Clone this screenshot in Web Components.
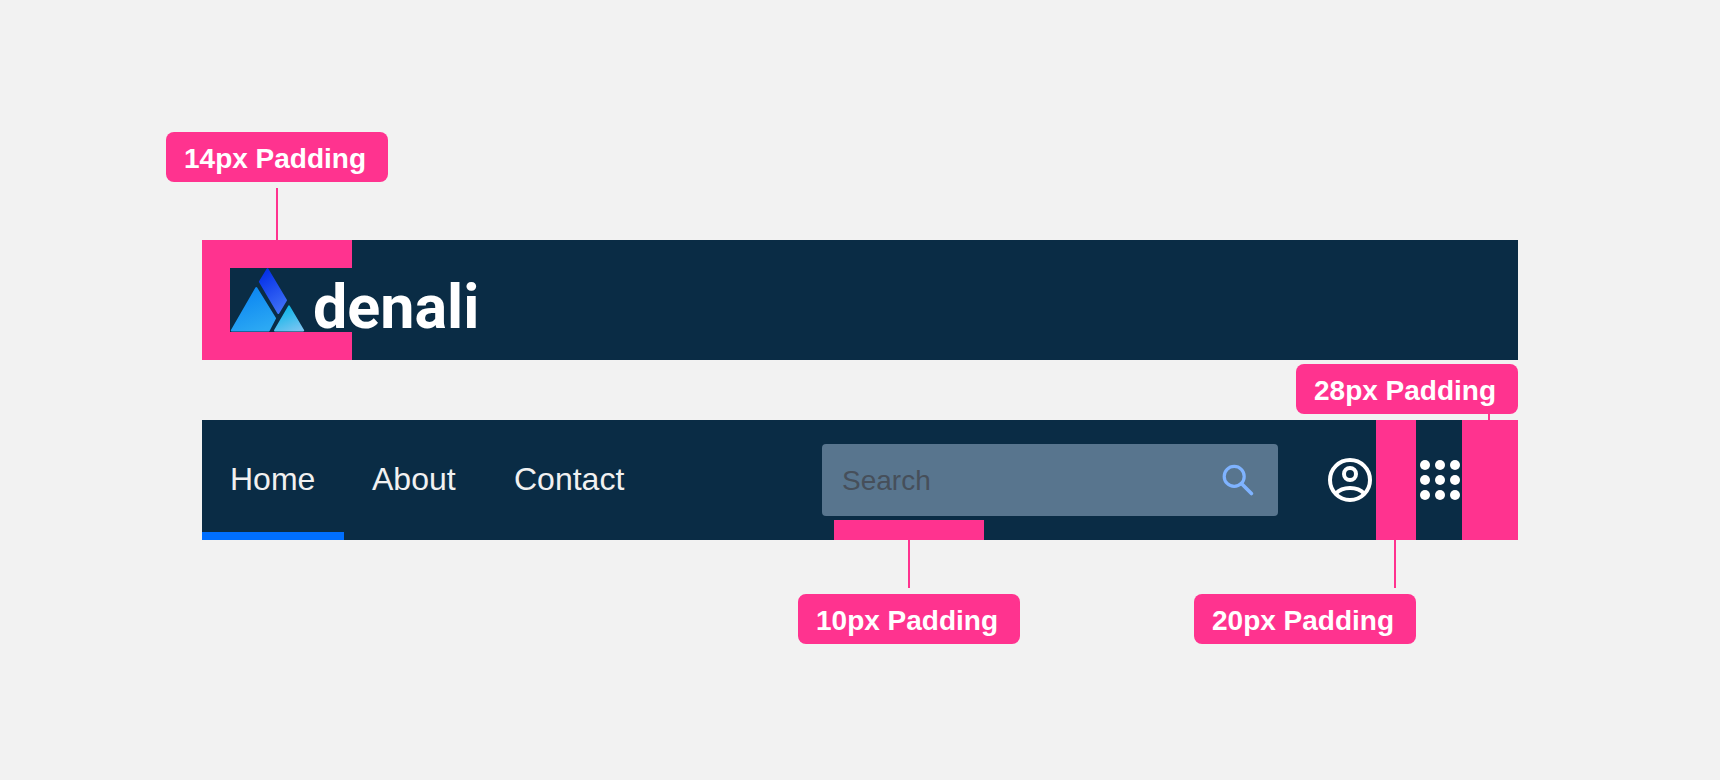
<!DOCTYPE html>
<html lang="en">
<head>
<meta charset="utf-8">
<title>Denali navbar padding</title>
<style>
  :root {
    --navy: #0a2c45;
    --pink: #ff338f;
    --page: #f2f2f2;
  }
  body { margin: 0; background: var(--page); font-family: "Liberation Sans", Arial, sans-serif; }
</style>
</head>
<body>
<spec-page>
  <brand-bar>
    <pad-callout>14px Padding</pad-callout>
  </brand-bar>
  <nav-bar>
    <nav-item slot="links" href="#home" active>Home</nav-item>
    <nav-item slot="links" href="#about">About</nav-item>
    <nav-item slot="links" href="#contact">Contact</nav-item>
  </nav-bar>
</spec-page>

<script>
  const define = (name, html) => {
    const template = document.createElement('template');
    template.innerHTML = html;
    customElements.define(name, class extends HTMLElement {
      constructor() {
        super();
        this.attachShadow({ mode: 'open' }).append(template.content.cloneNode(true));
      }
      connectedCallback() {
        const link = this.shadowRoot.querySelector('a[data-link]');
        if (link && this.hasAttribute('href')) link.href = this.getAttribute('href');
      }
    });
  };

  define('spec-page', `
    <style>
      :host { display: block; }
      main {
        box-sizing: border-box; min-height: 100vh; padding: 0 202px;
        display: flex; flex-direction: column; justify-content: center; gap: 60px;
      }
    </style>
    <main><slot></slot></main>`);

  /* A label with a thin stem that leads to the highlighted padding. */
  define('pad-callout', `
    <style>
      :host { display: flex; flex-direction: column; align-items: center; gap: 6px; width: 222px; }
      :host([side="bottom"]) { flex-direction: column-reverse; }
      :host([edge="end"]) { align-items: flex-end; }
      :host([flush]) { gap: 0; }
      .label {
        box-sizing: border-box; width: 100%; height: 50px; padding: 0 18px;
        border-radius: 8px; background: var(--pink); color: #fff;
        font-size: 28px; font-weight: 700; line-height: 54px; white-space: nowrap;
      }
      .stem { width: 2px; height: var(--stem, 48px); margin: 0 var(--inset, 0); background: var(--pink); }
    </style>
    <div class="label"><slot></slot></div>
    <div class="stem"></div>`);

  define('denali-logo', `
    <style>
      :host { display: block; }
      a { display: flex; align-items: center; gap: 8px; height: 64px; padding-right: 8px;
          background: var(--navy); color: #fff; text-decoration: none; }
      svg { display: block; flex: none; }
      span { font: 700 61px/64px Roboto, sans-serif; padding-top: 14px; }
    </style>
    <a href="#denali">
      <svg width="75" height="64" viewBox="0 0 75 64" stroke-width="2" stroke-linejoin="round" aria-hidden="true">
        <defs>
          <linearGradient id="left" x1="0.3" y1="0" x2="0.7" y2="1"><stop stop-color="#0a84f2"/><stop offset="1" stop-color="#2ca9f3"/></linearGradient>
          <linearGradient id="top" x1="0.3" y1="0" x2="0.7" y2="1"><stop stop-color="#0430e8"/><stop offset="1" stop-color="#3f70f7"/></linearGradient>
          <linearGradient id="right" x1="0.3" y1="0" x2="0.8" y2="1"><stop stop-color="#06b5e9"/><stop offset="1" stop-color="#78c4f1"/></linearGradient>
        </defs>
        <path d="M26.3 20 L45 50.3 L38.8 62.4 H1.8 Z" fill="url(#left)" stroke="url(#left)"/>
        <path d="M37.5 1.2 L56 32.3 L48.3 45 L29.9 13.7 Z" fill="url(#top)" stroke="url(#top)"/>
        <path d="M59 38.4 L73.2 62.4 H45 Z" fill="url(#right)" stroke="url(#right)"/>
      </svg>
      <span>denali</span>
    </a>`);

  define('brand-bar', `
    <style>
      :host { display: block; }
      header {
        position: relative; display: flex; padding: 28px;
        background: linear-gradient(var(--pink), var(--pink)) 0 0 / 150px 100% no-repeat var(--navy);
      }
      ::slotted(pad-callout) { position: absolute; left: -36px; bottom: 100%; --stem: 52px; }
    </style>
    <header><denali-logo></denali-logo><slot></slot></header>`);

  define('nav-item', `
    <style>
      :host { display: flex; }
      a {
        box-sizing: border-box; display: flex; align-items: center; min-width: 142px; padding: 0 28px 2px;
        color: #f1f1f1; text-decoration: none; font-size: 32px; line-height: 36px;
      }
      :host([active]) a { box-shadow: inset 0 -8px #006fff; }
    </style>
    <a data-link href="#"><slot></slot></a>`);

  define('search-box', `
    <style>
      :host { display: block; position: relative; }
      form {
        box-sizing: border-box; display: flex; align-items: center; height: 72px;
        padding: 0 24px 0 20px; border-radius: 4px; background: #58758e;
      }
      input {
        flex: 1; min-width: 0; padding: 2px 0 0; border: 0; outline: 0; background: none;
        color: #fff; font: 28px/32px "Liberation Sans", Arial, sans-serif;
      }
      input::placeholder { color: #464f5a; opacity: 1; }
      button { padding: 0; border: 0; background: none; }
      svg { display: block; }
      .gap { position: absolute; left: 12px; top: calc(100% + 4px); width: 150px; height: 20px; background: var(--pink); }
      pad-callout { position: absolute; left: -36px; top: 100%; }
    </style>
    <form role="search">
      <input type="search" placeholder="Search" aria-label="Search">
      <button type="button" aria-label="Submit search">
        <svg width="32" height="32" viewBox="0 0 32 32" fill="none" stroke="#7fb3ff">
          <circle cx="12.2" cy="12.4" r="10" stroke-width="3.2"/>
          <path d="M19.4 19.6 L29.4 29.6" stroke-width="3.6" stroke-linecap="round"/>
        </svg>
      </button>
    </form>
    <div class="gap"><pad-callout side="bottom">10px Padding</pad-callout></div>`);

  define('nav-bar', `
    <style>
      :host { display: block; }
      header { display: flex; align-items: center; height: 120px; background: var(--navy); }
      nav { display: flex; align-self: stretch; }
      search-box { flex: 0 1 456px; margin: 0 50px 0 auto; }
      button { flex: none; padding: 0; border: 0; background: none; }
      .user { margin-right: 4px; }
      .apps { margin: 0 2px 0 4px; }
      svg { display: block; }
      .pad { position: relative; flex: none; align-self: stretch; background: var(--pink); }
      .twenty { width: 40px; }
      .twenty-eight { width: 56px; }
      pad-callout { position: absolute; right: 0; }
      .twenty pad-callout { top: 100%; --inset: 20px; }
      .twenty-eight pad-callout { bottom: 100%; --inset: 28px; --stem: 6px; }
    </style>
    <header>
      <nav aria-label="Main"><slot name="links"></slot></nav>
      <search-box></search-box>
      <button class="user" type="button" aria-label="Account">
        <svg width="44" height="44" viewBox="0 0 44 44" fill="none" stroke="#fff" stroke-width="4">
          <circle cx="22" cy="22" r="20"/>
          <circle cx="22" cy="16" r="6"/>
          <path d="M8 35.4 C11 32 16 30 22 30 S33 32 36 35.4"/>
        </svg>
      </button>
      <div class="pad twenty"><pad-callout side="bottom" edge="end">20px Padding</pad-callout></div>
      <button class="apps" type="button" aria-label="Apps">
        <svg width="40" height="40" viewBox="0 0 40 40" fill="#fff">
          <circle cx="5" cy="5" r="5"/><circle cx="20" cy="5" r="5"/><circle cx="35" cy="5" r="5"/>
          <circle cx="5" cy="20" r="5"/><circle cx="20" cy="20" r="5"/><circle cx="35" cy="20" r="5"/>
          <circle cx="5" cy="35" r="5"/><circle cx="20" cy="35" r="5"/><circle cx="35" cy="35" r="5"/>
        </svg>
      </button>
      <div class="pad twenty-eight"><pad-callout edge="end" flush>28px Padding</pad-callout></div>
    </header>`);
</script>
</body>
</html>
